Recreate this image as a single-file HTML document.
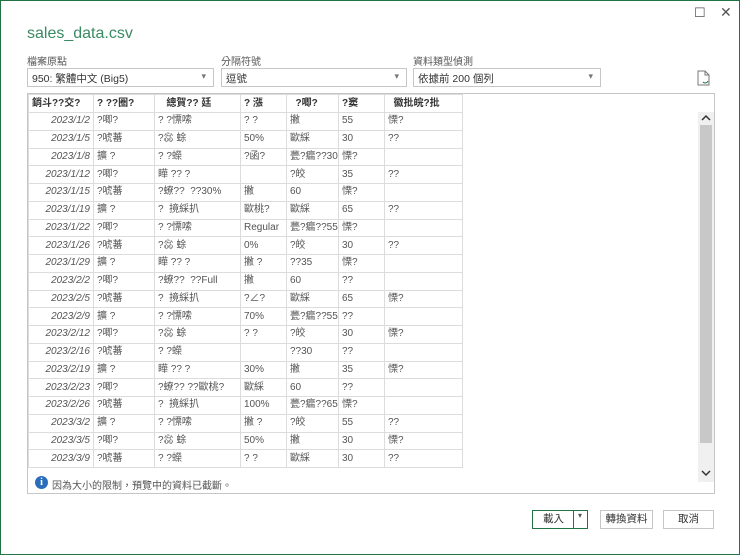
<!DOCTYPE html>
<html><head><meta charset="utf-8"><style>
*{box-sizing:border-box;margin:0;padding:0}
body{width:740px;height:555px;background:#fff;font-family:"Liberation Sans","Noto Sans CJK TC",sans-serif;color:#444;position:relative;overflow:hidden;font-size:11px}
.win{position:absolute;left:0;top:0;width:740px;height:555px;border:1px solid #217346}
.a{position:absolute}
.title{left:27px;top:25px;font-size:16px;color:#3a8a62}
.lbl{font-size:10px;color:#555;top:53px}
.dd{top:68px;height:19px;border:1px solid #c6c6c6;font-size:10.5px;padding:2px 4px;color:#333}
.dd:after{content:"▾";position:absolute;right:7px;top:2px;font-size:9px;color:#777}
.box{left:27px;top:93px;width:688px;height:401px;border:1px solid #c6c6c6}
table{position:absolute;left:28px;top:94px;border-collapse:collapse;font-size:10px;table-layout:fixed;width:434px}
td{border:1px solid #dcdcdc;height:17.75px;padding:0 3px;white-space:nowrap;overflow:hidden;color:#555;vertical-align:middle;line-height:16px}
tr.h td{font-weight:bold;color:#333;height:18px}
td:first-child{text-align:right;font-style:italic}
tr.h td:first-child{text-align:left;font-style:normal}
.sb{left:698px;top:112px;width:16px;height:370px;background:#f0f0f0}
.thumb{left:700px;top:125px;width:12px;height:318px;background:#c8c8c8}
.btn{top:510px;height:19px;border:1px solid #c6c6c6;font-size:10.5px;text-align:center;line-height:17px;color:#333}
</style></head><body><div class="win"></div>
<div class="a" style="left:694px;top:5px;font-size:13px;color:#555">☐</div>
<div class="a" style="left:720px;top:4px;font-size:14px;color:#555">✕</div>
<div class="a title">sales_data.csv</div>
<div class="a lbl" style="left:27px">檔案原點</div>
<div class="a lbl" style="left:221px">分隔符號</div>
<div class="a lbl" style="left:413px">資料類型偵測</div>
<div class="a dd" style="left:27px;width:187px">950: 繁體中文 (Big5)</div>
<div class="a dd" style="left:221px;width:186px">逗號</div>
<div class="a dd" style="left:413px;width:188px">依據前 200 個列</div>
<svg class="a" style="left:697px;top:70px" width="14" height="16" viewBox="0 0 14 16"><path d="M1 1h7l4 4v10H1z" fill="none" stroke="#777"/><path d="M8 1v4h4" fill="none" stroke="#777"/><path d="M6 12a3 3 0 0 0 5-1" fill="none" stroke="#217346"/></svg>
<div class="a box"></div>
<table>
<colgroup><col style="width:65px"><col style="width:61px"><col style="width:86px"><col style="width:46px"><col style="width:52px"><col style="width:46px"><col style="width:78px"></colgroup>
<tr class="h"><td>銷斗??交?</td><td>? ??圈?</td><td>&nbsp;&nbsp;&nbsp;總賀?? 廷</td><td>? 漲</td><td>&nbsp;&nbsp;?唧?</td><td>?窦</td><td>&nbsp;&nbsp;徽批皖?批</td></tr>
<tr><td>2023/1/2</td><td>?唧?</td><td>? ?慓嗦</td><td>? ?</td><td>撇</td><td>55</td><td>慄?</td></tr>
<tr><td>2023/1/5</td><td>?唬蕃</td><td>?惢 蜍</td><td>50%</td><td>歐綵</td><td>30</td><td>??</td></tr>
<tr><td>2023/1/8</td><td>擴 ?</td><td>? ?蠑</td><td>?函?</td><td>甍?瘺??30</td><td>慄?</td><td></td></tr>
<tr><td>2023/1/12</td><td>?唧?</td><td>瞱 ?? ?</td><td></td><td>?皎</td><td>35</td><td>??</td></tr>
<tr><td>2023/1/15</td><td>?唬蕃</td><td>?蟟?? &nbsp;??30%</td><td>撇</td><td>60</td><td>慄?</td><td></td></tr>
<tr><td>2023/1/19</td><td>擴 ?</td><td>? &nbsp;摬綵扒</td><td>歐桃?</td><td>歐綵</td><td>65</td><td>??</td></tr>
<tr><td>2023/1/22</td><td>?唧?</td><td>? ?慓嗦</td><td>Regular</td><td>甍?瘺??55</td><td>慄?</td><td></td></tr>
<tr><td>2023/1/26</td><td>?唬蕃</td><td>?惢 蜍</td><td>0%</td><td>?皎</td><td>30</td><td>??</td></tr>
<tr><td>2023/1/29</td><td>擴 ?</td><td>瞱 ?? ?</td><td>撇 ?</td><td>??35</td><td>慄?</td><td></td></tr>
<tr><td>2023/2/2</td><td>?唧?</td><td>?蟟?? &nbsp;??Full</td><td>撇</td><td>60</td><td>??</td><td></td></tr>
<tr><td>2023/2/5</td><td>?唬蕃</td><td>? &nbsp;摬綵扒</td><td>?∠?</td><td>歐綵</td><td>65</td><td>慄?</td></tr>
<tr><td>2023/2/9</td><td>擴 ?</td><td>? ?慓嗦</td><td>70%</td><td>甍?瘺??55</td><td>??</td><td></td></tr>
<tr><td>2023/2/12</td><td>?唧?</td><td>?惢 蜍</td><td>? ?</td><td>?皎</td><td>30</td><td>慄?</td></tr>
<tr><td>2023/2/16</td><td>?唬蕃</td><td>? ?蠑</td><td></td><td>??30</td><td>??</td><td></td></tr>
<tr><td>2023/2/19</td><td>擴 ?</td><td>瞱 ?? ?</td><td>30%</td><td>撇</td><td>35</td><td>慄?</td></tr>
<tr><td>2023/2/23</td><td>?唧?</td><td>?蟟?? ??歐桃?</td><td>歐綵</td><td>60</td><td>??</td><td></td></tr>
<tr><td>2023/2/26</td><td>?唬蕃</td><td>? &nbsp;摬綵扒</td><td>100%</td><td>甍?瘺??65</td><td>慄?</td><td></td></tr>
<tr><td>2023/3/2</td><td>擴 ?</td><td>? ?慓嗦</td><td>撇 ?</td><td>?皎</td><td>55</td><td>??</td></tr>
<tr><td>2023/3/5</td><td>?唧?</td><td>?惢 蜍</td><td>50%</td><td>撇</td><td>30</td><td>慄?</td></tr>
<tr><td>2023/3/9</td><td>?唬蕃</td><td>? ?蠑</td><td>? ?</td><td>歐綵</td><td>30</td><td>??</td></tr>
</table>
<div class="a sb"></div><div class="a thumb"></div>
<svg class="a" style="left:700px;top:113px" width="12" height="10"><path d="M2 7l4-4 4 4" fill="none" stroke="#333" stroke-width="1.5"/></svg>
<svg class="a" style="left:700px;top:468px" width="12" height="10"><path d="M2 3l4 4 4-4" fill="none" stroke="#333" stroke-width="1.5"/></svg>
<div class="a" style="left:35px;top:476px;width:13px;height:13px;border-radius:50%;background:#2a6ebb;color:#fff;font-size:10px;font-weight:bold;text-align:center;line-height:13px;font-family:'Liberation Serif',serif">i</div>
<div class="a" style="left:52px;top:477px;font-size:10px;color:#555">因為大小的限制，預覽中的資料已截斷。</div>
<div class="a btn" style="left:532px;width:56px;border-color:#217346;text-align:left;padding-left:10px">載入</div>
<div class="a" style="left:573px;top:510px;width:1px;height:19px;background:#217346"></div>
<div class="a" style="left:578px;top:511px;font-size:8px;color:#555">▾</div>
<div class="a btn" style="left:600px;width:53px">轉換資料</div>
<div class="a btn" style="left:663px;width:51px">取消</div>
</body></html>
